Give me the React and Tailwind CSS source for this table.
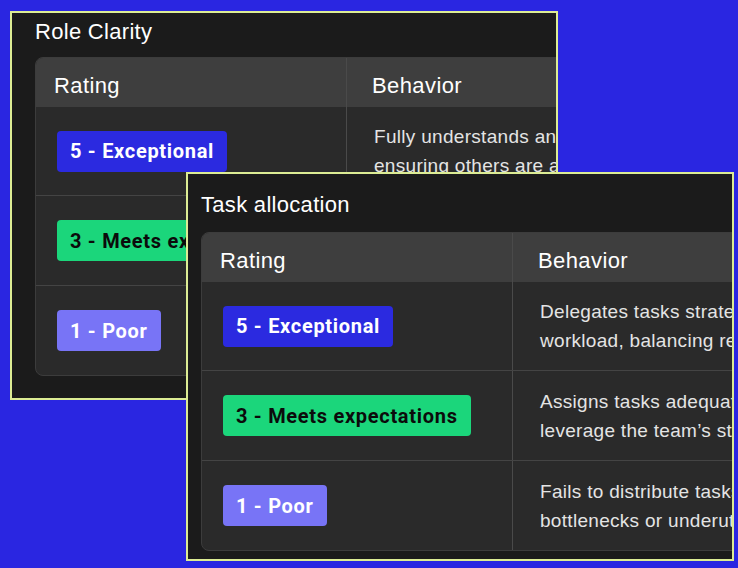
import React from "react";

const badgeStyles = {
  5: "bg-[#2b2ae0] text-white",
  3: "bg-[#1bd67b] text-[#0b0b0b]",
  1: "bg-[#7874f6] text-white",
};

// One rating pill, e.g. "5 - Exceptional"
const Badge = ({ level, label }) => (
  <span
    className={`inline-flex h-[41px] items-center rounded-[4px] px-[13px] font-['Roboto',sans-serif] text-[20px] font-bold tracking-[0.7px] ${badgeStyles[level]}`}
  >
    {level} - {label}
  </span>
);

const RatingTable = ({ rows }) => (
  <div className="w-[780px] overflow-hidden rounded-lg border border-[#3c3c3c] bg-[#2a2a2a]">
    {/* Header */}
    <div className="grid h-[49px] grid-cols-[311px_1fr] bg-[#3e3e3e] text-[22px] tracking-[0.4px] text-white">
      <div className="flex items-center border-r border-[#4a4a4a] pl-[18px] pt-[5px]">
        Rating
      </div>
      <div className="flex items-center pl-[25px] pt-[5px]">Behavior</div>
    </div>
    {/* Body */}
    {rows.map((row, i) => (
      <div
        key={i}
        className={`grid h-[88px] grid-cols-[311px_1fr] ${
          i > 0 ? "h-[90px] border-t border-[#444444]" : ""
        }`}
      >
        <div className="flex items-center border-r border-[#4a4a4a] pl-[21px]">
          <Badge level={row.level} label={row.label} />
        </div>
        <div className="flex items-center whitespace-nowrap pl-[27px] text-[19px] leading-[29px] tracking-[0.3px] text-[#e4e4e4]">
          <p>
            {row.lines[0]}
            <br />
            {row.lines[1]}
          </p>
        </div>
      </div>
    ))}
  </div>
);

const roleRows = [
  {
    level: 5,
    label: "Exceptional",
    lines: [
      "Fully understands and clearly communicates their role,",
      "ensuring others are aware of responsibilities.",
    ],
  },
  {
    level: 3,
    label: "Meets expectations",
    lines: [
      "Understands their role and responsibilities,",
      "with occasional need for clarification.",
    ],
  },
  {
    level: 1,
    label: "Poor",
    lines: [
      "Unclear about their role, leading to overlap",
      "or gaps in team responsibilities.",
    ],
  },
];

const taskRows = [
  {
    level: 5,
    label: "Exceptional",
    lines: [
      "Delegates tasks strategically based on skills and",
      "workload, balancing resources across the team.",
    ],
  },
  {
    level: 3,
    label: "Meets expectations",
    lines: [
      "Assigns tasks adequately but does not always",
      "leverage the team’s strengths.",
    ],
  },
  {
    level: 1,
    label: "Poor",
    lines: [
      "Fails to distribute tasks effectively, causing",
      "bottlenecks or underutilization.",
    ],
  },
];

export default function App() {
  return (
    <div className="relative h-[568px] w-[738px] overflow-hidden bg-[#2a26e1] font-['Liberation_Sans',Arial,sans-serif]">
      {/* Back window */}
      <div className="absolute left-[10px] top-[11px] h-[389px] w-[548px] overflow-hidden border-2 border-[#dcec94] bg-[#1b1b1b] pl-[23px] pt-[7px]">
        <h2 className="text-[22px] leading-[24px] tracking-[0.3px] text-white">
          Role Clarity
        </h2>
        <div className="mt-[13px]">
          <RatingTable rows={roleRows} />
        </div>
      </div>

      {/* Front window */}
      <div className="absolute left-[186px] top-[172px] h-[389px] w-[548px] overflow-hidden border-2 border-[#dcec94] bg-[#1b1b1b] pl-[13px] pt-[19px]">
        <h2 className="text-[22px] leading-[24px] tracking-[0.3px] text-white">
          Task allocation
        </h2>
        <div className="mt-[15px]">
          <RatingTable rows={taskRows} />
        </div>
      </div>
    </div>
  );
}
